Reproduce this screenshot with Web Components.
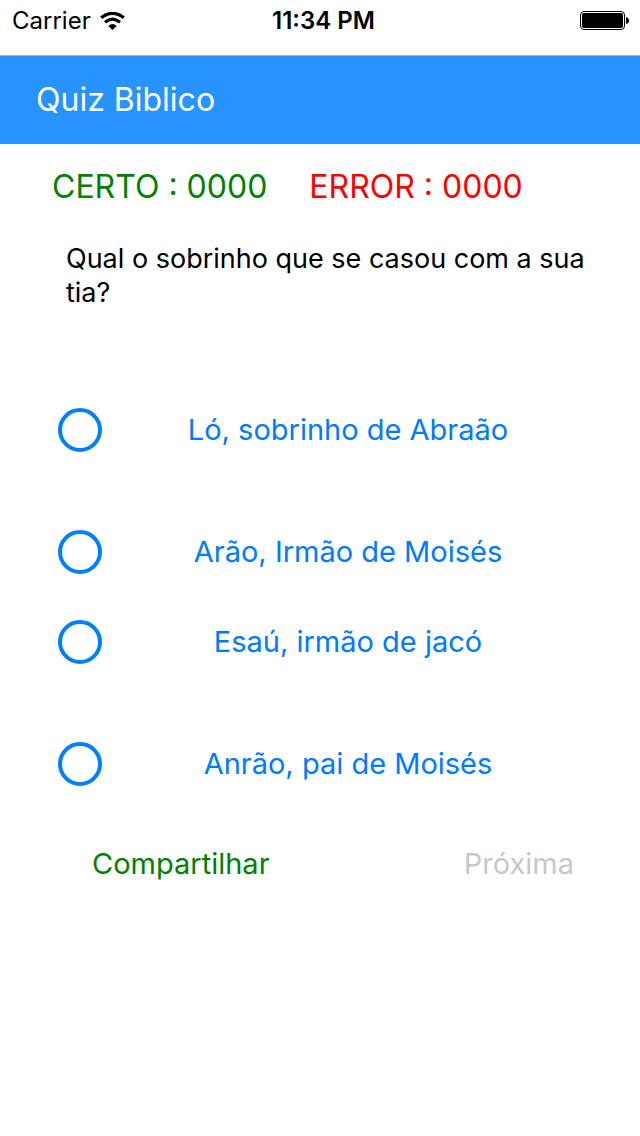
<!DOCTYPE html>
<html lang="pt">
<head>
<meta charset="utf-8">
<meta name="viewport" content="width=device-width, initial-scale=1">
<title>Quiz Biblico</title>
<style>
  body { margin: 0; background: #fff; color: #000; font-family: Inter, "Liberation Sans", sans-serif; }
</style>
</head>
<body>
<quiz-app></quiz-app>
<script>
const define = (name, html) => {
  const template = document.createElement("template");
  template.innerHTML = html;
  customElements.define(name, class extends HTMLElement {
    constructor() {
      super();
      this.attachShadow({ mode: "open" }).append(template.content.cloneNode(true));
    }
  });
};

define("status-bar", `
  <style>
    :host { display: grid; grid-template-columns: 1fr auto 1fr; align-items: center; height: 41px; padding: 0 11px 0 12px; font-size: 24px; line-height: 41px; }
    .carrier { display: flex; align-items: center; gap: 9px; }
    .time { padding-left: 6px; font-weight: 600; }
    svg { display: block; }
    .battery { justify-self: end; }
  </style>
  <span class="carrier"><span>Carrier</span>
    <svg width="25" height="18" viewBox="0 0 25 18" aria-hidden="true">
      <path d="M1.2 5.8Q12.5-3.2 23.8 5.8" fill="none" stroke="#000" stroke-width="3.2"/>
      <path d="M5 10.2Q12.5 4 20 10.2" fill="none" stroke="#000" stroke-width="3.2"/>
      <path d="M8.3 14Q12.5 10 16.7 14L12.5 18Z"/>
    </svg>
  </span>
  <span class="time">11:34 PM</span>
  <svg class="battery" width="49" height="19" viewBox="0 0 49 19" aria-hidden="true">
    <rect x=".5" y=".5" width="44" height="18" rx="3.5" fill="none" stroke="#000"/>
    <rect x="2" y="2" width="41" height="15" rx="2"/>
    <path d="M46 6q3 1 3 3.5T46 13z"/>
  </svg>
`);

define("title-bar", `
  <style>
    :host { display: block; box-sizing: border-box; border-top: 1px solid #a8b0b8; background: #2793ff; color: #fff; padding: 22px 36px; }
    h1 { margin: 0; font-size: 32px; font-weight: 400; line-height: 44px; }
  </style>
  <h1><slot></slot></h1>
`);

define("score-item", `
  <style>
    :host { display: flex; gap: 9px; font-size: 32px; line-height: 40px; }
  </style>
  <slot></slot><slot name="value"></slot>
`);

define("quiz-option", `
  <style>
    :host { display: block; }
    label { display: grid; grid-template-columns: 44px 1fr; align-items: center; color: #007aff; font-size: 29px; line-height: 44px; text-align: center; cursor: pointer; }
    input { appearance: none; box-sizing: border-box; width: 44px; height: 44px; margin: 0; border: 4px solid #0080ff; border-radius: 50%; }
    input:checked { background: radial-gradient(#0080ff 50%, transparent 54%); }
  </style>
  <label><input type="radio"><span><slot></slot></span></label>
`);

define("quiz-button", `
  <style>
    :host { display: block; }
    button { display: block; margin: 0; padding: 0; border: 0; background: none; color: inherit; font: inherit; font-size: 29px; line-height: 44px; cursor: pointer; }
  </style>
  <button type="button"><slot></slot></button>
`);

define("quiz-app", `
  <style>
    :host { display: block; }
    status-bar { margin-bottom: 14px; }
    .scores { display: flex; gap: 42px; padding: 23px 52px 0; }
    .right { color: #008000; }
    .wrong { color: #f00; }
    .question { margin: 35px 48px 0 66px; min-height: 166px; font-size: 27px; line-height: 34px; }
    .options { display: grid; gap: 46px; padding: 0 46px 0 58px; }
    .group { display: grid; gap: 78px; }
    .actions { display: flex; justify-content: space-between; padding: 56px 66px 0 92px; }
    .share { color: #008000; }
    .next { color: #c8c8c8; }
  </style>
  <status-bar></status-bar>
  <title-bar>Quiz Biblico</title-bar>
  <main>
    <div class="scores">
      <score-item class="right"><span>CERTO :</span><span slot="value">0000</span></score-item>
      <score-item class="wrong"><span>ERROR :</span><span slot="value">0000</span></score-item>
    </div>
    <p class="question">Qual o sobrinho que se casou com a sua tia?</p>
    <div class="options" role="radiogroup">
      <div class="group">
        <quiz-option>Ló, sobrinho de Abraão</quiz-option>
        <quiz-option>Arão, Irmão de Moisés</quiz-option>
      </div>
      <div class="group">
        <quiz-option>Esaú, irmão de jacó</quiz-option>
        <quiz-option>Anrão, pai de Moisés</quiz-option>
      </div>
    </div>
    <div class="actions">
      <quiz-button class="share">Compartilhar</quiz-button>
      <quiz-button class="next">Próxima</quiz-button>
    </div>
  </main>
`);
</script>
</body>
</html>
